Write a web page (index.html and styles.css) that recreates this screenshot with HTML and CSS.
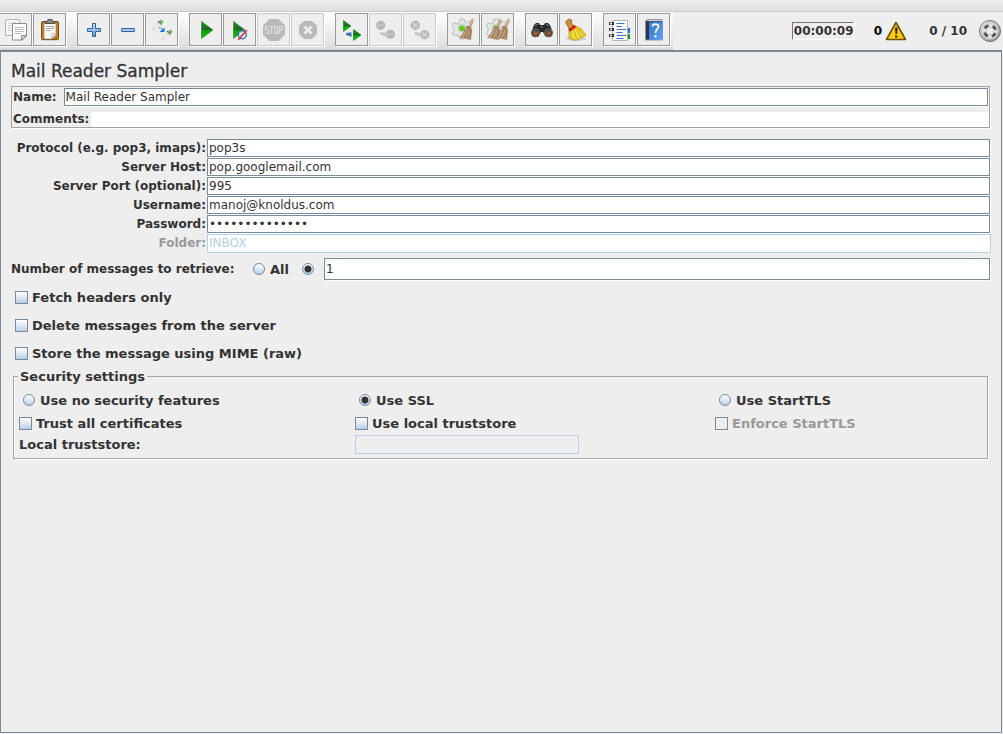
FILE: index.html
```html
<!DOCTYPE html>
<html lang="en">
<head>
<meta charset="utf-8">
<title>Mail Reader Sampler</title>
<link rel="stylesheet" href="styles.css">
</head>
<body>
<svg class="defs" aria-hidden="true">
  <defs>
    <linearGradient id="green" x1="0" y1="0" x2="0" y2="1"><stop offset="0" stop-color="#2f8f2f"/><stop offset=".48" stop-color="#1d661d"/><stop offset=".52" stop-color="#0b9a0b"/><stop offset="1" stop-color="#08cf08"/></linearGradient>
    <linearGradient id="blue" x1="0" y1="0" x2="0" y2="1"><stop offset="0" stop-color="#c6dcf2"/><stop offset="1" stop-color="#6f9fd4"/></linearGradient>
    <linearGradient id="book" x1="0" y1="0" x2="1" y2="1"><stop offset="0" stop-color="#3b74c4"/><stop offset="1" stop-color="#5fa0ee"/></linearGradient>
    <linearGradient id="metal" x1="0" y1="0" x2="1" y2="1"><stop offset="0" stop-color="#f4f4f4"/><stop offset="1" stop-color="#8c8c8c"/></linearGradient>
    <g id="gear">
      <path d="M12 5h4l1 3 2 1 3-2 2 3-2 3v3l2 2-2 4-3-1-2 1-1 3h-4l-1-3-2-1-3 1-2-3 2-2v-3l-2-2 2-3 3 1 2-1z" fill="#e3e6e7" stroke="#b9bdbf"/>
      <circle cx="14" cy="14" r="4" fill="#c6dbb4" stroke="#c4c9c0" stroke-width=".7"/><circle cx="14" cy="14.500" r="2.800" fill="#66c922"/>
    </g>
    <g id="broom">
      <path d="M24 5l1.500 1-3 8-2-1z" fill="#d4b694" stroke="#a58763" stroke-width=".6"/>
      <path d="M18.500 12l4.500 1.500 1 3-1 9.500-5-1-7-1 4-4z" fill="#b39270"/>
      <path d="M18.500 12.500l4.500 1.500" stroke="#86674a"/>
      <path d="M18 15l-5 8M20 15l-4 9M21 15l-2 10M23 15l-1 10" stroke="#8d6c4c" stroke-width=".7"/>
      <path d="M19 15l-5 9M21 16l-3 8" stroke="#d6bb98" stroke-width=".7"/>
    </g>
    <g id="dropper">
      <path d="M0 10.500L7 3" stroke="#c3c9c0" stroke-width="2.400"/><path d="M.5 10L7 3" stroke="#f6f8f5" stroke-width="1.200"/>
      <path d="M5 2l3.500 3.500" stroke="#557547" stroke-width="1.300"/><path d="M7 4l2.500-2.500" stroke="#7aa868" stroke-width="3.400"/><path d="M8 2l1-1" stroke="#a5cf91"/>
    </g>
  </defs>
</svg>
<div class="menubar"></div>
<header class="topbar">
  <div class="tools" role="toolbar" aria-label="Tools">
    <div class="group">
      <button class="tool" type="button" aria-label="Copy"><svg viewBox="0 0 31 31"><path d="M5.500 5.500h14v16h-14z" fill="#f7f7f5" stroke="#b5b5b2"/><path d="M8 9h8M8 11.500h4M8 14h4M8 16.500h4" stroke="#c9c9c6"/><path d="M12.500 9.500h14v12.500l-4 4h-10z" fill="#fafaf8" stroke="#8d8d8a"/><path d="M15 13.500h9M15 15.500h9M15 17.500h9M15 19.500h6" stroke="#bcbcb9"/><path d="M21.500 26v-4.500h5z" fill="#d8d8d4" stroke="#8d8d8a"/></svg></button>
      <button class="tool" type="button" aria-label="Paste"><svg viewBox="0 0 31 31"><ellipse cx="16" cy="26" rx="9" ry="1" fill="#cfcfcf"/><rect x="7.500" y="7.500" width="17" height="18" rx="1" fill="#c27c14" stroke="#7c4c0a"/><path d="M10 9h12v12l-4 4h-8z" fill="#f6f6f4" stroke="#8d8b84" stroke-width=".7"/><path d="M12 12.500h8M12 14.500h8M12 16.500h5" stroke="#a9a9a9"/><path d="M17.500 24.500l1-5 4 1z" fill="#fff" stroke="#999" stroke-width=".7"/><path d="M11 9.500V7.500h2l1-2h4l1 2h2v2z" fill="#858881" stroke="#50534d"/></svg></button>
    </div>
    <div class="group">
      <button class="tool" type="button" aria-label="Expand all"><svg viewBox="0 0 31 31"><path d="M14.500 9.500h3v5h5v3h-5v5h-3v-5h-5v-3h5z" fill="url(#blue)" stroke="#2f5fa5" stroke-linejoin="round"/></svg></button>
      <button class="tool" type="button" aria-label="Collapse all"><svg viewBox="0 0 31 31"><rect x="9.500" y="14.500" width="13" height="3" rx=".5" fill="#a9c8e9" stroke="#2f5fa5"/></svg></button>
      <button class="tool" type="button" aria-label="Toggle"><svg viewBox="0 0 31 31"><use href="#dropper" x="7" y="5"/><use href="#dropper" x="16" y="15"/><path d="M13 13.500l3.500 1.500" stroke="#5c9ce8" stroke-width="1.500" stroke-dasharray="1.500 .5"/><path d="M18.500 13.500v4.500h-5z" fill="#1877e8"/></svg></button>
    </div>
    <div class="group">
      <button class="tool" type="button" aria-label="Start"><svg viewBox="0 0 31 31"><path d="M11.500 7.500l11.500 8.500-11.500 8.500z" fill="url(#green)" stroke="#3a8a3a" stroke-width=".7"/></svg></button>
      <button class="tool" type="button" aria-label="Start no pauses"><svg viewBox="0 0 31 31"><path d="M9.500 7.500l11.500 8.500-11.500 8.500z" fill="url(#green)" stroke="#3a8a3a" stroke-width=".7"/><circle cx="18.300" cy="20.800" r="4" fill="#dfe9f8" fill-opacity=".8" stroke="#3f70b5" stroke-width="1.400"/><path d="M14 26l9-10" stroke="#e02020" stroke-width="1.300"/></svg></button>
      <button class="tool" type="button" aria-label="Stop" disabled><svg viewBox="0 0 31 31"><path d="M11.500 5h9l6.500 6.500v9L20.500 27h-9L5 20.500v-9z" fill="#b8b8b8"/><g fill="none" stroke="#dcdcdc" stroke-width="1.300"><path d="M10.500 12.700H7.500v3h3v3.600h-3M11.500 12.700h4M13.500 12.700V20M16.500 12.700h3v6.600h-3zM21.500 20v-7.300h3V16h-3"/></g></svg></button>
      <button class="tool" type="button" aria-label="Shutdown" disabled><svg viewBox="0 0 31 31"><path d="M12 7h8l5 5v8l-5 5h-8l-5-5v-8z" fill="#bababa"/><path d="M12.500 12.500l7 7M19.500 12.500l-7 7" stroke="#ececec" stroke-width="3"/></svg></button>
    </div>
    <div class="group">
      <button class="tool" type="button" aria-label="Remote start all"><svg viewBox="0 0 31 31"><path d="M7.500 6.500l7.500 5.500-7.500 5.500zM17.500 15.500l7.500 5.500-7.500 5.500z" fill="url(#green)" stroke="#3a8a3a" stroke-width=".6"/><path d="M7.500 6.500l7.500 5.500-7.500 5.500z" fill="url(#green)"/><path d="M17.500 15.500l7.500 5.500-7.500 5.500z" fill="url(#green)"/><path d="M10 18.500l2 1v-1h3.500v4.500l-3.500-1.500-2-.5z" fill="#426fb8"/></svg></button>
      <button class="tool" type="button" aria-label="Remote stop all" disabled><svg viewBox="0 0 31 31"><circle cx="10.700" cy="11.300" r="4.700" fill="#b9b9b9"/><circle cx="20.300" cy="20.300" r="4.700" fill="#b9b9b9"/><path d="M7.500 11.500h6.500M17 20.500h6.500" stroke="#d0d0d0" stroke-width="1.600" stroke-dasharray="1.200 .5"/><path d="M10 18l2 .5h3v4l-5-2.500z" fill="#c1c1c1"/></svg></button>
      <button class="tool" type="button" aria-label="Remote shutdown all" disabled><svg viewBox="0 0 31 31"><circle cx="11.300" cy="11.300" r="4.700" fill="#b9b9b9"/><circle cx="20.700" cy="20.700" r="4.700" fill="#b9b9b9"/><path d="M9.300 9.300l4 4M13.300 9.300l-4 4M18.700 18.700l4 4M22.700 18.700l-4 4" stroke="#d8d8d8" stroke-width="1.400"/><path d="M10.500 18l2 .5h3v4l-5-2.500z" fill="#c1c1c1"/></svg></button>
    </div>
    <div class="group">
      <button class="tool" type="button" aria-label="Clear"><svg viewBox="0 0 31 31"><use href="#gear"/><use href="#broom"/></svg></button>
      <button class="tool" type="button" aria-label="Clear all"><svg viewBox="0 0 31 31"><use href="#gear"/><use href="#broom" x="-6"/><use href="#broom" x="2"/></svg></button>
    </div>
    <div class="group">
      <button class="tool" type="button" aria-label="Search"><svg viewBox="0 0 31 31"><path d="M8 11l2-2h3l1 2h4l1-2h3l2 2 3 8-2 4h-5l-2-3-1-2h-2l-1 2-2 3H7l-2-4z" fill="#292929"/><path d="M9 12l3-2M20 10l3 2M15 13h2" stroke="#8b8b8b"/><circle cx="9.500" cy="19" r="4" fill="#3a3a3a" stroke="#777"/><circle cx="22.500" cy="19" r="4" fill="#3a3a3a" stroke="#777"/><circle cx="9.500" cy="19.300" r="2.400" fill="#a65a23"/><circle cx="22.500" cy="19.300" r="2.400" fill="#a65a23"/></svg></button>
      <button class="tool" type="button" aria-label="Reset search"><svg viewBox="0 0 31 31"><ellipse cx="16" cy="24.500" rx="10" ry="2.500" fill="#cfcfcf"/><path d="M5.500 8l3-3 3 1v3l2 3-4 3-3-5z" fill="#c99043" stroke="#8a5a1c" stroke-width=".8"/><path d="M9 16l6-4 5 2 6 7-10 5.500-7-2.500z" fill="#f0d62a" stroke="#b59408" stroke-width=".8"/><path d="M11 17l1 7M14 16l3 9M16 15l5 8M18 15l6 6" stroke="#bfa014" stroke-width=".7"/><path d="M12 17l2 8M15 16l4 8" stroke="#fff27b" stroke-width=".8"/><path d="M9 16.500l6.500-4.500" stroke="#d52020" stroke-width="3"/></svg></button>
    </div>
    <div class="group">
      <button class="tool" type="button" aria-label="Function helper"><svg viewBox="0 0 31 31"><path d="M8.500 6.500h15v20h-15z" fill="#fdfdfd" stroke="#b5b5ae"/><path d="M24 14h2v5h-2z" fill="#1670e8"/><path d="M24 20h2v5h-2z" fill="#199519"/><path d="M12.500 9.500h8M12.500 12.500h5M12.500 15.500h10M12.500 18.500h6M12.500 21.500h10M12.500 24.500h7" stroke="#3971cb"/><path d="M5 9.500h5M5 15.500h5M5 21.500h5" stroke="#333" stroke-width="3"/><path d="M6 9.500h2M6 15.500h2M6 21.500h2" stroke="#e8e8e8" stroke-width="2"/></svg></button>
      <button class="tool" type="button" aria-label="Help"><svg viewBox="0 0 31 31"><path d="M7.500 7l2-1.500h14l1 1.500v19h-17z" fill="#27364d" stroke="#92989f"/><path d="M9 6.500h15" stroke="#d5d5d5"/><path d="M11 7.500h13.500V26H11z" fill="url(#book)"/><path d="M14.500 12.500c0-3 6-3 6 0 0 2.500-3 2.500-3 6.500" fill="none" stroke="#f0f6fd" stroke-width="1.800"/><path d="M16.500 21h2v2.500h-2z" fill="#f0f6fd"/></svg></button>
    </div>
  </div>
  <div class="status">
    <output class="timer">00:00:09</output>
    <div class="errors"><span>0</span><svg class="warn" viewBox="0 0 22 20" aria-label="Warnings"><path d="M11 1.500L20.500 18.500H1.500z" fill="#fc0" stroke="#6b5200" stroke-width="1.600" stroke-linejoin="round"/><path d="M10 6.500h2.600l-.5 6.500h-1.600zM10 14.500h2.500v2H10z" fill="#2a2410"/></svg></div>
    <span class="threads">0 / 10</span>
    <svg class="wheel" viewBox="0 0 24 24" aria-label="Remote status"><circle cx="12" cy="12" r="10.500" fill="url(#metal)" stroke="#747474"/><circle cx="12" cy="12" r="8.500" fill="#b2b2b2"/><circle cx="12" cy="12" r="6" fill="none" stroke="#dedede" stroke-width="4"/><circle cx="12" cy="12" r="5.700" fill="none" stroke="#4c4c4c" stroke-width="2.600" stroke-dasharray="4.500 4.453" stroke-dashoffset="-2.200"/><circle cx="12" cy="12" r="3.500" fill="#ececec"/></svg>
  </div>
</header>
<main class="panel">
  <h1>Mail Reader Sampler</h1>
  <section class="identity">
    <div class="name-row"><label for="name">Name:</label><input class="field" id="name" type="text" value="Mail Reader Sampler"></div>
    <div class="comment-row"><label for="comments">Comments:</label><input class="plain" id="comments" type="text"></div>
  </section>
  <section class="server">
    <label for="protocol">Protocol (e.g. pop3, imaps):</label><input class="field" id="protocol" type="text" value="pop3s">
    <label for="host">Server Host:</label><input class="field" id="host" type="text" value="pop.googlemail.com">
    <label for="port">Server Port (optional):</label><input class="field" id="port" type="text" value="995">
    <label for="user">Username:</label><input class="field" id="user" type="text" value="manoj@knoldus.com">
    <label for="pass">Password:</label><input class="field" id="pass" type="password" value="abcdefghijklmn">
    <label class="off" for="folder">Folder:</label><input class="field" id="folder" type="text" value="INBOX" disabled>
  </section>
  <div class="count">
    <span class="count-label" id="count-label">Number of messages to retrieve:</span>
    <label class="choice"><input type="radio" name="count">All</label>
    <input class="some" type="radio" name="count" aria-label="Limited number" checked>
    <input class="field tall" type="text" value="1" aria-labelledby="count-label">
  </div>
  <div class="options">
    <label class="choice"><input type="checkbox">Fetch headers only</label>
    <label class="choice"><input type="checkbox">Delete messages from the server</label>
    <label class="choice"><input type="checkbox">Store the message using MIME (raw)</label>
  </div>
  <fieldset class="security">
    <legend>Security settings</legend>
    <div class="security-grid">
      <label class="choice mode"><input type="radio" name="security">Use no security features</label>
      <label class="choice mode"><input type="radio" name="security" checked>Use SSL</label>
      <label class="choice mode"><input type="radio" name="security">Use StartTLS</label>
      <label class="choice"><input type="checkbox">Trust all certificates</label>
      <label class="choice"><input type="checkbox">Use local truststore</label>
      <label class="choice off"><input type="checkbox" disabled>Enforce StartTLS</label>
      <label class="store-label" for="store">Local truststore:</label>
      <input class="field store" id="store" type="text" disabled>
    </div>
  </fieldset>
</main>
</body>
</html>
```
FILE: styles.css
```css
* { box-sizing: border-box; }

body {
  margin: 0;
  min-height: 100vh;
  display: flex;
  flex-direction: column;
  background: #eee;
  color: #333;
  font: bold 13px/19px "DejaVu Sans", sans-serif;
}

input, button { font: inherit; color: inherit; margin: 0; }

.defs { position: absolute; width: 0; height: 0; }

.menubar {
  height: 12px;
  background: linear-gradient(#eee, #dedede);
  border-bottom: 1px solid #ccc;
}

.topbar {
  display: flex;
  align-items: stretch;
  height: 38px;
}

.tools {
  display: flex;
  gap: 10px;
  padding: 1px 2px 0 0;
  margin-left: -1px;
  background: linear-gradient(#fff, #ddd);
  border-bottom: 1px solid #ccc;
}

.group { display: flex; gap: 1px; padding-right: 1px; }

.tool {
  width: 33px;
  height: 33px;
  padding: 0;
  border: 1px solid #999;
  background: #eee;
  box-shadow: 1px 1px #fff;
}

.tool:disabled { border-color: #ccc; }
.tool svg { display: block; width: 31px; height: 31px; }

.status {
  display: flex;
  align-items: center;
  margin-left: auto;
  padding-right: 1px;
  font-size: 12px;
}

.timer {
  width: 62px;
  height: 18px;
  line-height: 16px;
  padding-left: 1px;
  border: 1px solid #fff;
  border-top-color: #777;
  border-left-color: #777;
  background: #eee;
  white-space: nowrap;
}

.errors { display: flex; align-items: center; gap: 3px; margin-left: 20px; color: #000; }
.warn { width: 22px; height: 20px; }
.threads { margin-left: 22px; }
.wheel { width: 24px; height: 24px; margin-left: 11px; }

.panel {
  flex: 1;
  margin: 0 1px 1px 0;
  padding: 9px 11px 10px 10px;
  border: 1px solid #7a8a99;
  border-top-width: 2px;
}

h1 {
  margin: 0 0 4px;
  font-weight: normal;
  font-size: 17px;
  line-height: 21px;
  -webkit-text-stroke: 0.3px #333;
}

.field {
  width: 100%;
  min-width: 0;
  height: 18px;
  padding: 0 1px;
  border: 1px solid #7a8a99;
  border-radius: 0;
  background: #fff;
  box-shadow: 1px 1px #fff;
  font-weight: normal;
  font-size: 12px;
  outline: none;
}

.field:disabled { border-color: #b8cfe5; color: #b8cfe5; box-shadow: none; }

.identity { border: 1px solid #a3a3a3; box-shadow: 1px 1px #fff; font-size: 12px; }
.name-row { display: flex; gap: 7px; padding: 1px; }
.comment-row { display: flex; padding: 4px 0 0 1px; gap: 2px; }
.comment-row label { line-height: 15px; }

.plain {
  flex: 1;
  min-width: 0;
  height: 15px;
  padding: 0;
  border: 0;
  background: #fff;
  font-weight: normal;
}

.server {
  display: grid;
  grid-template-columns: minmax(195px, max-content) 1fr;
  column-gap: 1px;
  grid-auto-rows: 19px;
  margin-top: 11px;
  font-size: 12px;
}

.server label { text-align: right; }
.off { color: #999; }
#folder { width: calc(100% + 1px); height: 19px; }

.count { display: flex; align-items: center; margin-top: 5px; }
.count-label { min-width: 232px; font-size: 12px; }
.count > .choice { margin-left: 10px; }
.some { flex: none; margin-left: 13px; }
.tall { flex: 1; height: 22px; margin-left: 10px; }

.choice { display: flex; align-items: center; gap: 4px; white-space: nowrap; }

input[type="checkbox"], input[type="radio"] {
  appearance: none;
  flex: none;
  width: 13px;
  height: 13px;
  border: 1px solid #7a8a99;
  background: linear-gradient(#fff, #dde8f3 50%, #b8cfe5);
}

input[type="radio"] { width: 12px; height: 12px; border-radius: 50%; }
.choice input[type="radio"] { margin-right: 1px; }
input[type="radio"]:checked { background: radial-gradient(circle, #333 3px, transparent 4px), linear-gradient(#fff, #b8cfe5); }
input[type="checkbox"]:disabled { background: #eee; }

.options { display: flex; flex-direction: column; gap: 9px; padding: 8px 4px 0; }

.security {
  margin: 4px 2px 0;
  padding: 0 5px 3px;
  min-width: 0;
  border: 1px solid #a3a3a3;
  box-shadow: 1px 1px #fff, inset 1px 0 #fff;
}

legend { margin-left: -1px; padding: 0 2px; line-height: 19px; }

.security-grid {
  display: grid;
  grid-template-columns: 336fr 360fr 267fr;
  grid-template-rows: 24px 22px 21px;
  align-items: center;
  padding-top: 2px;
}

.mode { padding-left: 4px; }
.store { width: 224px; height: 19px; background: #eee; }
```
